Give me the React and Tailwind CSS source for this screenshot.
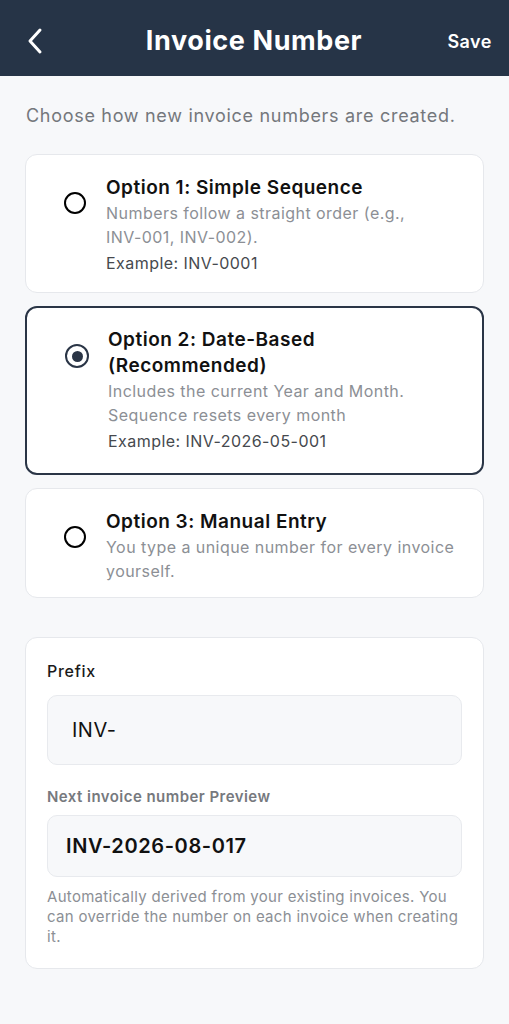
import { useState } from "react";

const options = [
  {
    id: 1,
    title: "Option 1: Simple Sequence",
    description: (
      <>
        Numbers follow a straight order (e.g.,{" "}
        <span className="whitespace-nowrap">INV-001,</span>{" "}
        <span className="whitespace-nowrap">INV-002).</span>
      </>
    ),
    example: "Example: INV-0001",
  },
  {
    id: 2,
    title: (
      <>
        Option 2: Date-Based <span className="whitespace-nowrap">(Recommended)</span>
      </>
    ),
    description: "Includes the current Year and Month. Sequence resets every month",
    example: "Example: INV-2026-05-001",
  },
  {
    id: 3,
    title: "Option 3: Manual Entry",
    description: "You type a unique number for every invoice yourself.",
  },
];

const Radio = ({ checked }) => {
  if (checked) {
    return (
      <div className="mt-[17px] ml-[38px] w-[24px] h-[24px] shrink-0 rounded-full border-[2.5px] border-[#2a3546] flex items-center justify-center">
        <div className="w-[11px] h-[11px] rounded-full bg-[#2a3546]" />
      </div>
    );
  }
  return (
    <div className="mt-[17px] ml-[38px] w-[22px] h-[22px] shrink-0 rounded-full border-2 border-black" />
  );
};

const OptionCard = ({ option, selected, onSelect }) => {
  let cardClass =
    "flex cursor-pointer rounded-[12px] border border-[#e6e8ec] bg-white pt-[20px] pr-[23px]";
  if (selected) {
    cardClass =
      "flex cursor-pointer rounded-[12px] border-2 border-[#2a3546] bg-white pt-[19px] pb-[22px] pr-[22px]";
  } else if (option.example) {
    cardClass += " pb-[19px]";
  } else {
    cardClass += " pb-[14px]";
  }

  return (
    <div className={cardClass} onClick={onSelect}>
      <Radio checked={selected} />
      <div className={selected ? "ml-[19px] flex flex-col" : "ml-[20px] flex flex-col"}>
        <div className="text-[19px] leading-[26px] font-semibold text-[#111111] tracking-[0.5px]">
          {option.title}
        </div>
        <div className="text-[16px] leading-[24px] text-[#8c8f95] tracking-[0.45px]">
          {option.description}
        </div>
        {option.example ? (
          <div className="mt-[4px] text-[16px] leading-[20px] text-[#46494e] tracking-[0.45px]">
            {option.example}
          </div>
        ) : null}
      </div>
    </div>
  );
};

export default function App() {
  const [selected, setSelected] = useState(2);

  return (
    <div
      className="min-h-[1024px] bg-[#f7f8fa]"
      style={{ fontFamily: "Inter, 'Noto Sans', sans-serif" }}
    >
      <div className="h-[76px] bg-[#263447] flex items-center justify-between px-[26px] pt-[6px]">
        <button className="w-[60px] text-white flex">
          <svg width="18" height="28" viewBox="0 0 18 28" fill="none">
            <path
              d="M14 3 L4 14 L14 25"
              stroke="white"
              strokeWidth="3"
              strokeLinecap="round"
              strokeLinejoin="round"
            />
          </svg>
        </button>
        <h1 className="text-[27px] font-bold text-white tracking-[0.6px] mr-[10px]">
          Invoice Number
        </h1>
        <button className="w-[60px] text-right text-[18px] font-semibold text-white tracking-[0.5px] -mr-[9px]">
          Save
        </button>
      </div>

      <div className="px-[25px]">
        <p className="mt-[28px] text-[18px] leading-[24px] text-[#74777c] pl-[1px] tracking-[0.7px]">
          Choose how new invoice numbers are created.
        </p>

        <div className="mt-[26px] flex flex-col gap-[13px]">
          {options.map((option) => (
            <OptionCard
              key={option.id}
              option={option}
              selected={selected === option.id}
              onSelect={() => setSelected(option.id)}
            />
          ))}
        </div>

        <div className="mt-[39px] rounded-[12px] border border-[#e6e8ec] bg-white px-[21px] pt-[22px] pb-[21px]">
          <label className="block text-[16px] leading-[22px] font-medium text-[#1a1a1a] tracking-[0.7px]">
            Prefix
          </label>
          <div className="mt-[13px] h-[70px] rounded-[10px] border border-[#e8eaee] bg-[#f7f8fa] flex items-center pl-[24px]">
            <span className="text-[20px] text-[#111111] tracking-[0.5px]">INV-</span>
          </div>

          <label className="mt-[22px] block text-[15px] leading-[20px] font-semibold text-[#76797e] tracking-[0.45px]">
            Next invoice number Preview
          </label>
          <div className="mt-[8px] h-[62px] rounded-[10px] border border-[#e8eaee] bg-[#f7f8fa] flex items-center pl-[18px]">
            <span className="text-[20px] font-semibold text-[#111111] tracking-[0.6px]">
              INV-2026-08-017
            </span>
          </div>

          <p className="mt-[10px] text-[15px] leading-[20px] text-[#8c8f95] tracking-[0.3px]">
            Automatically derived from your existing invoices. You can override the number on each invoice when creating it.
          </p>
        </div>
      </div>
    </div>
  );
}
